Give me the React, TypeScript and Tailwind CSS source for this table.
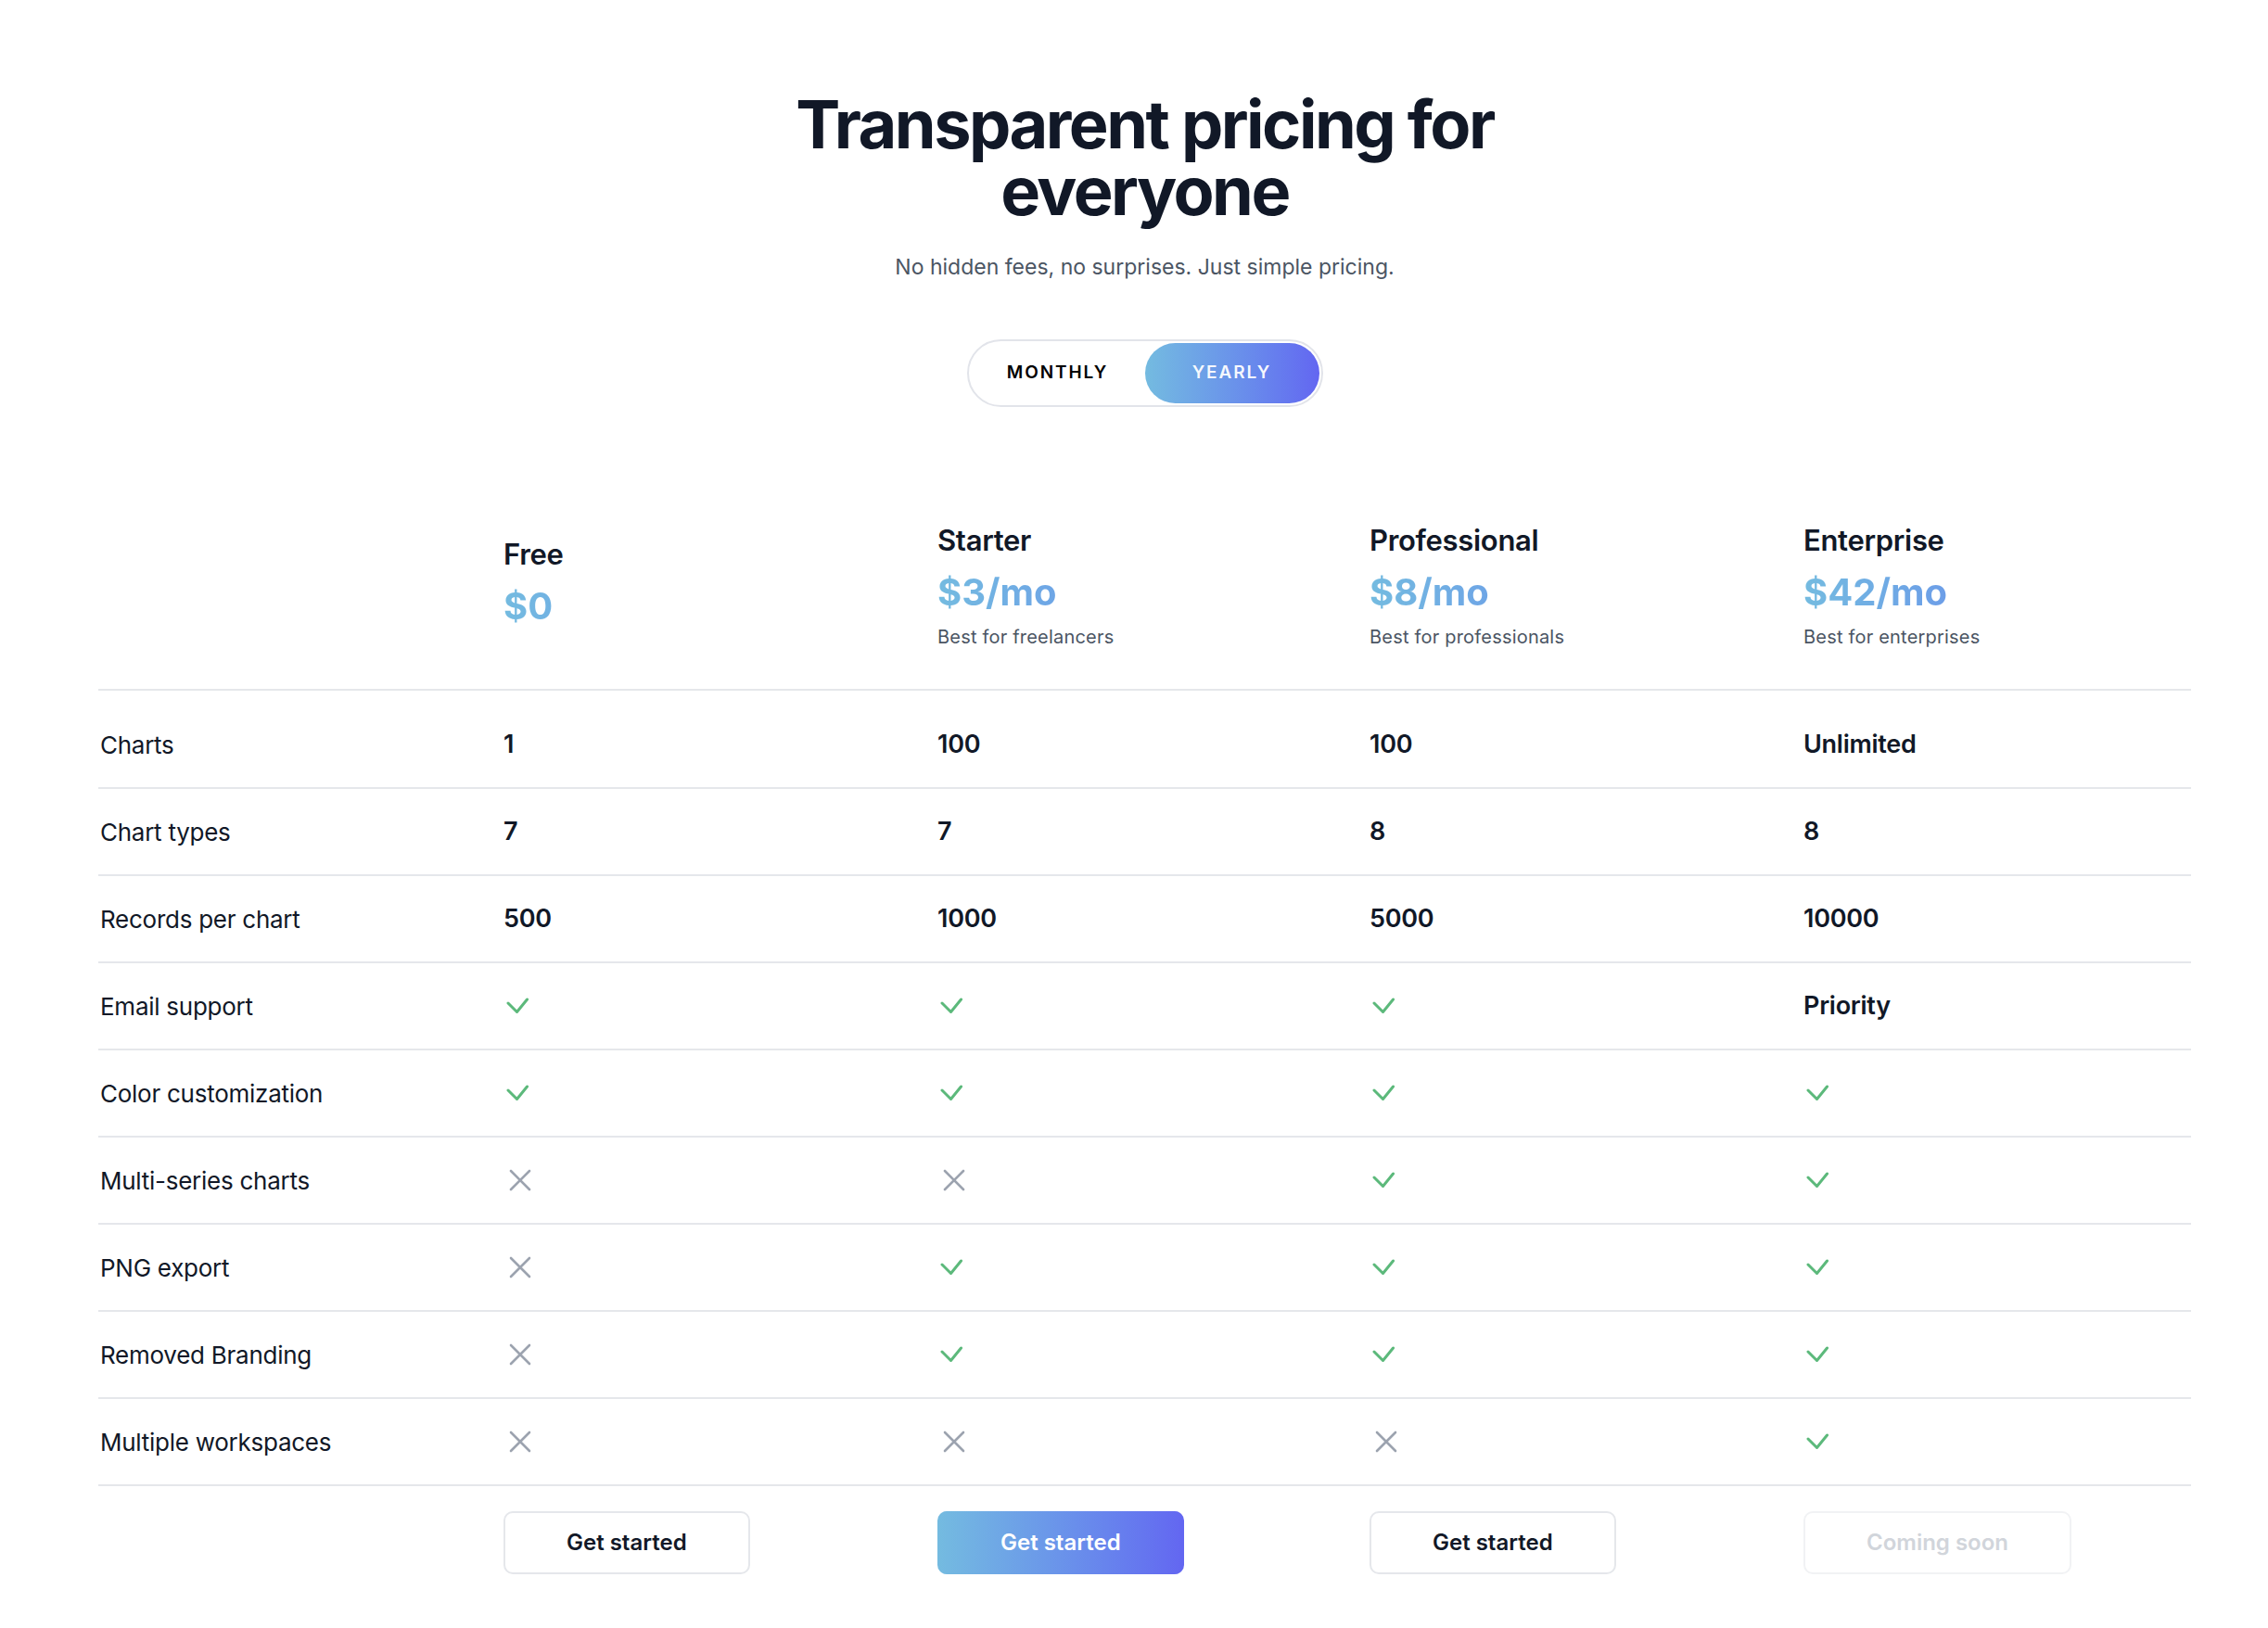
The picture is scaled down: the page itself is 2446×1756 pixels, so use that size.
import React from "react";

type Cell = string | boolean;

const plans = [
  { name: "Free", price: "$0", desc: "" },
  { name: "Starter", price: "$3/mo", desc: "Best for freelancers" },
  { name: "Professional", price: "$8/mo", desc: "Best for professionals" },
  { name: "Enterprise", price: "$42/mo", desc: "Best for enterprises" },
];

const features: { label: string; values: Cell[] }[] = [
  { label: "Charts", values: ["1", "100", "100", "Unlimited"] },
  { label: "Chart types", values: ["7", "7", "8", "8"] },
  { label: "Records per chart", values: ["500", "1000", "5000", "10000"] },
  { label: "Email support", values: [true, true, true, "Priority"] },
  { label: "Color customization", values: [true, true, true, true] },
  { label: "Multi-series charts", values: [false, false, true, true] },
  { label: "PNG export", values: [false, true, true, true] },
  { label: "Removed Branding", values: [false, true, true, true] },
  { label: "Multiple workspaces", values: [false, false, false, true] },
];

const cols = "grid grid-cols-[437px_468px_466px_468px_418px]";

function CheckIcon() {
  return (
    <svg width="24" height="18" viewBox="0 0 24 18" fill="none" className="ml-[3px]">
      <path
        d="M2 6 L11.5 15.5 L22.5 2"
        stroke="#5cb97b"
        strokeWidth="3"
        strokeLinecap="round"
        strokeLinejoin="round"
      />
    </svg>
  );
}

function CrossIcon() {
  return (
    <svg width="24" height="24" viewBox="0 0 24 24" fill="none" className="ml-[6px]">
      <path
        d="M2 2 L22 22 M22 2 L2 22"
        stroke="#9ca3af"
        strokeWidth="2.6"
        strokeLinecap="round"
      />
    </svg>
  );
}

function Value({ v }: { v: Cell }) {
  if (v === true) return <CheckIcon />;
  if (v === false) return <CrossIcon />;
  return (
    <span className="text-[27px] font-semibold tracking-[-0.01em] text-[#111827]">{v}</span>
  );
}

export default function App() {
  return (
    <main className="min-h-screen bg-white pl-[23px] font-['Inter','Noto_Sans',sans-serif] text-[#111827]">
      <div className="flex flex-col items-center pt-[98px] pb-[60px]">
        <h1 className="max-w-[820px] text-center text-[72px] font-bold leading-[72px] tracking-[-0.035em] text-[#111827]">
          Transparent pricing for everyone
        </h1>
        <p className="mt-[30px] text-[23px] leading-[32px] text-[#4b5563]">
          No hidden fees, no surprises. Just simple pricing.
        </p>

        <div className="mt-[62px] flex rounded-full border-2 border-[#e2e4ea] p-[2px]">
          <button className="h-[65px] w-[188px] rounded-full text-[19px] font-semibold tracking-[0.1em] text-black">
            MONTHLY
          </button>
          <button className="h-[65px] w-[188px] rounded-full bg-linear-to-r from-[#74bbe0] to-[#6366f1] text-[19px] font-semibold tracking-[0.1em] text-white/95">
            YEARLY
          </button>
        </div>

        <div className="mt-[124px] w-[2257px]">
          <div className={`${cols} items-center border-b-2 border-[#e5e7eb] pb-[42px]`}>
            <div />
            {plans.map((p) => (
              <div key={p.name} className={p.desc ? "" : "pb-[8px]"}>
                <div className="text-[31px] font-semibold leading-[40px] tracking-[-0.01em] text-[#111827]">
                  {p.name}
                </div>
                <div className="mt-[12px] bg-linear-to-r from-[#74bbe0] to-[#6366f1] bg-clip-text text-[40px] font-bold leading-[48px] text-transparent">
                  {p.price}
                </div>
                {p.desc && (
                  <div className="mt-[10px] text-[20px] leading-[28px] tracking-[0.01em] text-[#4b5563]">
                    {p.desc}
                  </div>
                )}
              </div>
            ))}
          </div>

          <div className="pt-[12px]">
            {features.map((f) => (
              <div
                key={f.label}
                className={`${cols} h-[94px] items-center border-b-2 border-[#e5e7eb]`}
              >
                <div className="pl-[2px] text-[26px] tracking-[-0.01em] text-[#111827]">{f.label}</div>
                {f.values.map((v, i) => (
                  <div key={i} className="flex items-center">
                    <Value v={v} />
                  </div>
                ))}
              </div>
            ))}
          </div>

          <div className={`${cols} mt-[27px]`}>
            <div />
            <div>
              <button className="h-[68px] rounded-[10px] border-2 border-[#e5e7eb] bg-white px-[66px] text-[24px] font-semibold text-[#111827]">
                Get started
              </button>
            </div>
            <div>
              <button className="h-[68px] rounded-[10px] bg-linear-to-r from-[#74bbe0] to-[#6366f1] px-[68px] text-[24px] font-semibold text-white">
                Get started
              </button>
            </div>
            <div>
              <button className="h-[68px] rounded-[10px] border-2 border-[#e5e7eb] bg-white px-[66px] text-[24px] font-semibold text-[#111827]">
                Get started
              </button>
            </div>
            <div>
              <button
                disabled
                className="h-[68px] rounded-[10px] border-2 border-[#f1f2f4] bg-white px-[66px] text-[24px] font-semibold text-[#d1d5db]"
              >
                Coming soon
              </button>
            </div>
          </div>
        </div>
      </div>
    </main>
  );
}
